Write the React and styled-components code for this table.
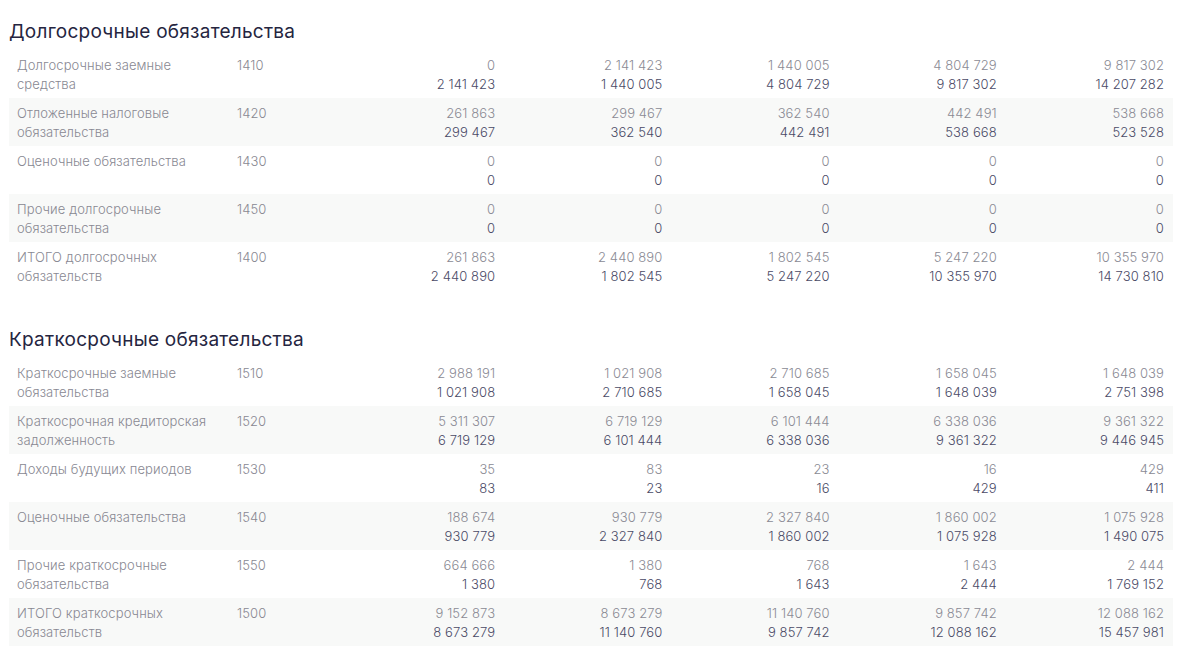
import React from "react";
import styled, { createGlobalStyle } from "styled-components";

const Global = createGlobalStyle`
  html, body { margin: 0; padding: 0; background: #ffffff; }
  body { font-family: Inter, "Noto Sans", "Liberation Sans", sans-serif; }
`;

const Page = styled.div`
  padding: 12px 10px 0 9px;
  width: 1164px;
`;

const Section = styled.section`
  & + & { margin-top: 30px; }
`;

const Title = styled.h2`
  margin: 0;
  height: 38px;
  display: flex;
  align-items: center;
  font-size: 19px;
  font-weight: 400;
  color: #25253f;
  letter-spacing: 0.25px;
`;

const Row = styled.div`
  display: grid;
  grid-template-columns: 220px 91px repeat(5, 1fr);
  height: 48px;
  box-sizing: border-box;
  padding: 6px 9px 0 8px;
  background: ${(p) => (p.$striped ? "#f8f9f8" : "transparent")};
  font-size: 13px;
  line-height: 19px;
  font-weight: 300;
  letter-spacing: 0.1px;
`;

const Label = styled.div`
  color: #888892;
  padding-right: 20px;
`;

const Code = styled.div`
  color: #888892;
`;

const Value = styled.div`
  text-align: right;
  display: flex;
  flex-direction: column;
`;

const Prev = styled.span`
  color: #8a8a94;
`;

const Curr = styled.span`
  color: #4a4a66;
`;

const longTerm = [
  ["Долгосрочные заемные средства", "1410", ["0", "2 141 423", "1 440 005", "4 804 729", "9 817 302", "14 207 282"]],
  ["Отложенные налоговые обязательства", "1420", ["261 863", "299 467", "362 540", "442 491", "538 668", "523 528"]],
  ["Оценочные обязательства", "1430", ["0", "0", "0", "0", "0", "0"]],
  ["Прочие долгосрочные обязательства", "1450", ["0", "0", "0", "0", "0", "0"]],
  ["ИТОГО долгосрочных обязательств", "1400", ["261 863", "2 440 890", "1 802 545", "5 247 220", "10 355 970", "14 730 810"]],
];

const shortTerm = [
  ["Краткосрочные заемные обязательства", "1510", ["2 988 191", "1 021 908", "2 710 685", "1 658 045", "1 648 039", "2 751 398"]],
  ["Краткосрочная кредиторская задолженность", "1520", ["5 311 307", "6 719 129", "6 101 444", "6 338 036", "9 361 322", "9 446 945"]],
  ["Доходы будущих периодов", "1530", ["35", "83", "23", "16", "429", "411"]],
  ["Оценочные обязательства", "1540", ["188 674", "930 779", "2 327 840", "1 860 002", "1 075 928", "1 490 075"]],
  ["Прочие краткосрочные обязательства", "1550", ["664 666", "1 380", "768", "1 643", "2 444", "1 769 152"]],
  ["ИТОГО краткосрочных обязательств", "1500", ["9 152 873", "8 673 279", "11 140 760", "9 857 742", "12 088 162", "15 457 981"]],
];

function Table({ title, rows }) {
  return (
    <Section>
      <Title>{title}</Title>
      {rows.map(([label, code, vals], i) => (
        <Row key={code} $striped={i % 2 === 1}>
          <Label>{label}</Label>
          <Code>{code}</Code>
          {[0, 1, 2, 3, 4].map((k) => (
            <Value key={k}>
              <Prev>{vals[k]}</Prev>
              <Curr>{vals[k + 1]}</Curr>
            </Value>
          ))}
        </Row>
      ))}
    </Section>
  );
}

export default function App() {
  return (
    <>
      <Global />
      <Page>
        <Table title="Долгосрочные обязательства" rows={longTerm} />
        <Table title="Краткосрочные обязательства" rows={shortTerm} />
      </Page>
    </>
  );
}
